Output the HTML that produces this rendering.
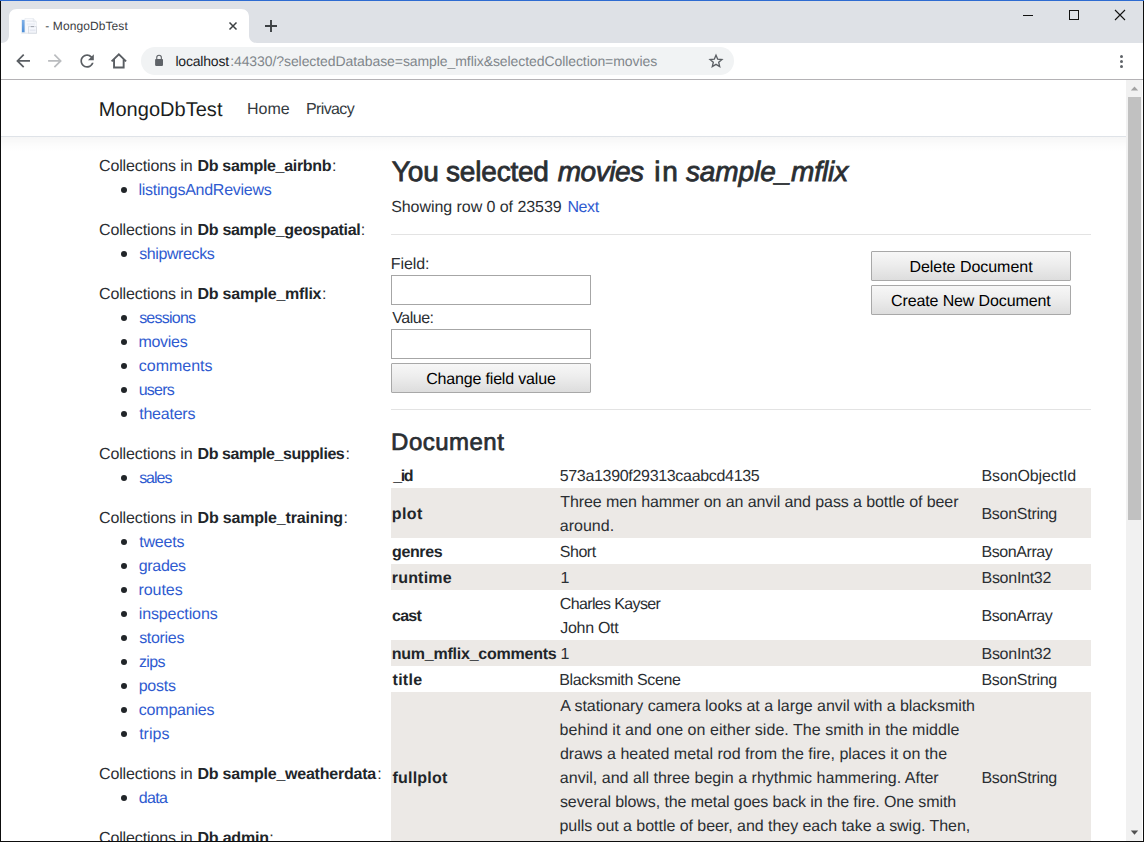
<!DOCTYPE html>
<html><head><meta charset="utf-8"><title>- MongoDbTest</title>
<style>
html,body{margin:0;padding:0;}
body{width:1144px;height:842px;overflow:hidden;position:relative;background:#fff;font-family:"Liberation Sans",sans-serif;}
.a{position:absolute;}
.t{position:absolute;white-space:pre;font-family:"Liberation Sans",sans-serif;text-rendering:geometricPrecision;}
.bul{position:absolute;left:121px;width:6px;height:6px;border-radius:50%;background:#212529;}
.stripe{position:absolute;left:391px;width:700px;background:#ece9e6;}
.hr{position:absolute;left:391px;width:700px;height:1px;background:#e3e3e3;}
.inp{position:absolute;left:391px;width:198px;height:28px;border:1px solid #a6a6a6;background:#fff;}
.btn{position:absolute;width:198px;height:28px;border:1px solid #a8a8a8;border-radius:1px;background:linear-gradient(#f7f7f7,#ededed 45%,#dddddd);}
</style></head><body>
<!-- tab strip -->
<div class="a" style="left:0;top:0;width:1144px;height:43px;background:#dee1e6;"></div>
<!-- toolbar -->
<div class="a" style="left:0;top:43px;width:1144px;height:36px;background:#fff;"></div>
<div class="a" style="left:0;top:79px;width:1144px;height:1px;background:#b4b2b5;"></div>
<!-- active tab -->
<svg class="a" style="left:0;top:0" width="260" height="44" viewBox="0 0 260 44">
<path d="M1 43 C6 43 9 40 9 35 L9 17 C9 12 12 9 17 9 L241 9 C246 9 249 12 249 17 L249 35 C249 40 252 43 257 43 L257 44 L1 44 Z" fill="#fff"/>
</svg>
<!-- favicon -->
<svg class="a" style="left:21px;top:18px" width="17" height="16" viewBox="0 0 17 16">
<defs><linearGradient id="fb" x1="0" y1="0" x2="0" y2="1"><stop offset="0" stop-color="#7fb0e8"/><stop offset="1" stop-color="#4d8ed8"/></linearGradient></defs>
<rect x="0.2" y="14.6" width="15.8" height="1" fill="#e3e5ea"/>
<rect x="0.2" y="1.4" width="0.6" height="13.2" fill="#eceef2"/>
<rect x="0.9" y="1.9" width="3.1" height="12.4" fill="url(#fb)"/>
<path d="M3.9 0.5 H12.2 L15.5 3.8 V15 H3.9 Z" fill="#f8f9fd" stroke="#e4e7ed" stroke-width="0.6"/>
<path d="M12.2 0.5 V3.8 H15.5" fill="#eef0f5" stroke="#d9dce3" stroke-width="0.5"/>
<rect x="5.6" y="2.6" width="6.2" height="1" fill="#e3e6ed"/>
<rect x="5.6" y="5.2" width="8.6" height="2.2" fill="#eceff6"/>
<rect x="7.4" y="8.7" width="8.2" height="6.4" fill="#f5f7fc" stroke="#cfd3db" stroke-width="0.7"/>
<rect x="9.8" y="8.3" width="3.2" height="0.8" fill="#8d929c"/>
<rect x="8.7" y="11.4" width="5.8" height="1.8" fill="#e6e9f2"/>
</svg>
<!-- tab close -->
<svg class="a" style="left:226px;top:19px" width="14" height="14" viewBox="0 0 14 14"><path d="M3.5 3.5 L10.5 10.5 M10.5 3.5 L3.5 10.5" stroke="#3c4043" stroke-width="1.5" fill="none"/></svg>
<!-- new tab plus -->
<svg class="a" style="left:262px;top:17px" width="18" height="18" viewBox="0 0 18 18"><path d="M9 3 V15 M3 9 H15" stroke="#3c4043" stroke-width="1.9" fill="none"/></svg>
<!-- window controls -->
<div class="a" style="left:1023px;top:15px;width:10px;height:1px;background:#111;"></div>
<div class="a" style="left:1069px;top:10px;width:8px;height:8px;border:1px solid #111;"></div>
<svg class="a" style="left:1114px;top:9px" width="12" height="12" viewBox="0 0 12 12"><path d="M1 1 L11 11 M11 1 L1 11" stroke="#111" stroke-width="1.1" fill="none"/></svg>
<!-- nav icons -->
<svg class="a" style="left:14px;top:52px" width="18" height="18" viewBox="0 0 18 18"><g transform="translate(9.1 8.95) scale(0.86) translate(-12 -12)"><path d="M20 11H7.83l5.59-5.59L12 4l-8 8 8 8 1.41-1.41L7.83 13H20v-2z" fill="#5a5e63"/></g></svg>
<svg class="a" style="left:46px;top:52px" width="18" height="18" viewBox="0 0 18 18"><g transform="translate(9 8.95) scale(0.86) translate(-12 -12)"><path d="M12 4l-1.41 1.41L16.17 11H4v2h12.17l-5.58 5.59L12 20l8-8z" fill="#babcbf"/></g></svg>
<svg class="a" style="left:78px;top:52px" width="18" height="18" viewBox="0 0 18 18"><g transform="translate(9.1 9) scale(0.84) translate(-12 -12)"><path d="M17.65 6.35C16.2 4.9 14.21 4 12 4c-4.42 0-7.99 3.58-7.99 8s3.57 8 7.99 8c3.73 0 6.84-2.55 7.73-6h-2.08c-.82 2.33-3.04 4-5.65 4-3.31 0-6-2.69-6-6s2.69-6 6-6c1.66 0 3.14.69 4.22 1.78L13 11h7V4l-2.35 2.35z" fill="#5a5e63"/></g></svg>
<svg class="a" style="left:110px;top:52px" width="18" height="18" viewBox="0 0 18 18"><path d="M1.6 9.4 L8.85 2.3 L16.1 9.4 M4.05 7.6 V15.45 H13.65 V7.6" stroke="#5a5e63" stroke-width="1.9" fill="none" stroke-linejoin="miter"/></svg>
<!-- omnibox -->
<div class="a" style="left:141px;top:47px;width:593px;height:28px;border-radius:14px;background:#f1f3f4;"></div>
<svg class="a" style="left:153px;top:54px" width="12" height="13" viewBox="0 0 12 13"><rect x="2.1" y="5.1" width="7.9" height="6.8" rx="0.8" fill="#5f6368"/><path d="M3.75 5.6 V3.6 A2.3 2.3 0 0 1 8.35 3.6 V5.6" stroke="#5f6368" stroke-width="1.1" fill="none"/></svg>
<svg class="a" style="left:708px;top:53px" width="16" height="16" viewBox="0 0 16 16"><g transform="translate(8 8.1) scale(0.9) translate(-8 -8.1)"><path d="M8 1.6 L9.9 6 L14.6 6.4 L11 9.5 L12.1 14.2 L8 11.7 L3.9 14.2 L5 9.5 L1.4 6.4 L6.1 6 Z" stroke="#5a5e63" stroke-width="1.5" fill="none" stroke-linejoin="miter"/></g></svg>
<!-- menu dots -->
<div class="a" style="left:1119.7px;top:55px;width:3.2px;height:3.2px;border-radius:50%;background:#5f6368;"></div>
<div class="a" style="left:1119.7px;top:59.9px;width:3.2px;height:3.2px;border-radius:50%;background:#5f6368;"></div>
<div class="a" style="left:1119.7px;top:64.8px;width:3.2px;height:3.2px;border-radius:50%;background:#5f6368;"></div>

<!-- page navbar -->
<div class="a" style="left:1px;top:136px;width:1125px;height:1px;background:#dfe3e8;"></div>
<div class="a" style="left:1px;top:137px;width:1125px;height:15px;background:linear-gradient(rgba(0,0,0,0.034),rgba(0,0,0,0.012) 55%,rgba(0,0,0,0));"></div>

<!-- bullets -->
<div class="bul" style="top:187.0px"></div>
<div class="bul" style="top:251.0px"></div>
<div class="bul" style="top:315.0px"></div>
<div class="bul" style="top:339.0px"></div>
<div class="bul" style="top:363.0px"></div>
<div class="bul" style="top:387.0px"></div>
<div class="bul" style="top:411.0px"></div>
<div class="bul" style="top:475.0px"></div>
<div class="bul" style="top:539.0px"></div>
<div class="bul" style="top:563.0px"></div>
<div class="bul" style="top:587.0px"></div>
<div class="bul" style="top:611.0px"></div>
<div class="bul" style="top:635.0px"></div>
<div class="bul" style="top:659.0px"></div>
<div class="bul" style="top:683.0px"></div>
<div class="bul" style="top:707.0px"></div>
<div class="bul" style="top:731.0px"></div>
<div class="bul" style="top:795.0px"></div>

<!-- hr -->
<div class="hr" style="top:234px"></div>
<div class="hr" style="top:409px"></div>
<!-- inputs & buttons -->
<div class="inp" style="top:275px"></div>
<div class="inp" style="top:329px"></div>
<div class="btn" style="left:391px;top:363px"></div>
<div class="btn" style="left:871px;top:251px"></div>
<div class="btn" style="left:871px;top:285px"></div>
<!-- table stripes -->
<div class="stripe" style="top:488px;height:50px"></div>
<div class="stripe" style="top:564px;height:26px"></div>
<div class="stripe" style="top:640px;height:26px"></div>
<div class="stripe" style="top:692px;height:150px"></div>

<span class="t" style="left:98.79px;top:95.07px;font-size:20px;line-height:30px;letter-spacing:0.026px;color:#1b1e21;">MongoDbTest</span>
<span class="t" style="left:247.02px;top:98.46px;font-size:16px;line-height:24px;letter-spacing:-0.025px;color:#343a40;">Home</span>
<span class="t" style="left:306.02px;top:98.46px;font-size:16px;line-height:24px;letter-spacing:-0.633px;color:#343a40;">Privacy</span>
<span class="t" style="left:98.95px;top:155.46px;font-size:16px;line-height:24px;letter-spacing:-0.117px;color:#2a2e32;">Collections in</span>
<span class="t" style="left:197.53px;top:155.46px;font-size:16px;line-height:24px;letter-spacing:-0.315px;color:#212529;font-weight:700;">Db sample_airbnb</span>
<span class="t" style="left:332.02px;top:155.46px;font-size:16px;line-height:24px;letter-spacing:0.000px;color:#2a2e32;">:</span>
<span class="t" style="left:98.95px;top:219.46px;font-size:16px;line-height:24px;letter-spacing:-0.117px;color:#2a2e32;">Collections in</span>
<span class="t" style="left:197.53px;top:219.46px;font-size:16px;line-height:24px;letter-spacing:-0.300px;color:#212529;font-weight:700;">Db sample_geospatial</span>
<span class="t" style="left:360.80px;top:219.46px;font-size:16px;line-height:24px;letter-spacing:0.000px;color:#2a2e32;">:</span>
<span class="t" style="left:98.95px;top:283.46px;font-size:16px;line-height:24px;letter-spacing:-0.117px;color:#2a2e32;">Collections in</span>
<span class="t" style="left:197.53px;top:283.46px;font-size:16px;line-height:24px;letter-spacing:-0.226px;color:#212529;font-weight:700;">Db sample_mflix</span>
<span class="t" style="left:322.02px;top:283.46px;font-size:16px;line-height:24px;letter-spacing:0.000px;color:#2a2e32;">:</span>
<span class="t" style="left:98.95px;top:443.46px;font-size:16px;line-height:24px;letter-spacing:-0.117px;color:#2a2e32;">Collections in</span>
<span class="t" style="left:197.53px;top:443.46px;font-size:16px;line-height:24px;letter-spacing:-0.441px;color:#212529;font-weight:700;">Db sample_supplies</span>
<span class="t" style="left:345.50px;top:443.46px;font-size:16px;line-height:24px;letter-spacing:0.000px;color:#2a2e32;">:</span>
<span class="t" style="left:98.95px;top:507.46px;font-size:16px;line-height:24px;letter-spacing:-0.117px;color:#2a2e32;">Collections in</span>
<span class="t" style="left:197.53px;top:507.46px;font-size:16px;line-height:24px;letter-spacing:-0.176px;color:#212529;font-weight:700;">Db sample_training</span>
<span class="t" style="left:343.50px;top:507.46px;font-size:16px;line-height:24px;letter-spacing:0.000px;color:#2a2e32;">:</span>
<span class="t" style="left:98.95px;top:763.46px;font-size:16px;line-height:24px;letter-spacing:-0.117px;color:#2a2e32;">Collections in</span>
<span class="t" style="left:197.53px;top:763.46px;font-size:16px;line-height:24px;letter-spacing:-0.227px;color:#212529;font-weight:700;">Db sample_weatherdata</span>
<span class="t" style="left:377.21px;top:763.46px;font-size:16px;line-height:24px;letter-spacing:0.000px;color:#2a2e32;">:</span>
<span class="t" style="left:98.95px;top:827.46px;font-size:16px;line-height:24px;letter-spacing:-0.117px;color:#2a2e32;">Collections in</span>
<span class="t" style="left:197.53px;top:827.46px;font-size:16px;line-height:24px;letter-spacing:-0.215px;color:#212529;font-weight:700;">Db admin</span>
<span class="t" style="left:269.14px;top:827.46px;font-size:16px;line-height:24px;letter-spacing:0.000px;color:#2a2e32;">:</span>
<span class="t" style="left:138.44px;top:179.46px;font-size:16px;line-height:24px;letter-spacing:-0.270px;color:#2f5bd0;">listingsAndReviews</span>
<span class="t" style="left:139.14px;top:243.46px;font-size:16px;line-height:24px;letter-spacing:-0.391px;color:#2f5bd0;">shipwrecks</span>
<span class="t" style="left:139.14px;top:307.46px;font-size:16px;line-height:24px;letter-spacing:-0.759px;color:#2f5bd0;">sessions</span>
<span class="t" style="left:138.42px;top:331.46px;font-size:16px;line-height:24px;letter-spacing:-0.283px;color:#2f5bd0;">movies</span>
<span class="t" style="left:138.84px;top:355.46px;font-size:16px;line-height:24px;letter-spacing:-0.025px;color:#2f5bd0;">comments</span>
<span class="t" style="left:138.73px;top:379.46px;font-size:16px;line-height:24px;letter-spacing:-0.769px;color:#2f5bd0;">users</span>
<span class="t" style="left:139.17px;top:403.46px;font-size:16px;line-height:24px;letter-spacing:-0.219px;color:#2f5bd0;">theaters</span>
<span class="t" style="left:139.14px;top:467.46px;font-size:16px;line-height:24px;letter-spacing:-1.007px;color:#2f5bd0;">sales</span>
<span class="t" style="left:139.17px;top:531.46px;font-size:16px;line-height:24px;letter-spacing:-0.194px;color:#2f5bd0;">tweets</span>
<span class="t" style="left:138.84px;top:555.46px;font-size:16px;line-height:24px;letter-spacing:-0.356px;color:#2f5bd0;">grades</span>
<span class="t" style="left:138.42px;top:579.46px;font-size:16px;line-height:24px;letter-spacing:-0.040px;color:#2f5bd0;">routes</span>
<span class="t" style="left:138.70px;top:603.46px;font-size:16px;line-height:24px;letter-spacing:-0.105px;color:#2f5bd0;">inspections</span>
<span class="t" style="left:139.14px;top:627.46px;font-size:16px;line-height:24px;letter-spacing:-0.299px;color:#2f5bd0;">stories</span>
<span class="t" style="left:138.89px;top:651.46px;font-size:16px;line-height:24px;letter-spacing:-0.622px;color:#2f5bd0;">zips</span>
<span class="t" style="left:138.70px;top:675.46px;font-size:16px;line-height:24px;letter-spacing:-0.216px;color:#2f5bd0;">posts</span>
<span class="t" style="left:138.84px;top:699.46px;font-size:16px;line-height:24px;letter-spacing:-0.219px;color:#2f5bd0;">companies</span>
<span class="t" style="left:139.17px;top:723.46px;font-size:16px;line-height:24px;letter-spacing:0.012px;color:#2f5bd0;">trips</span>
<span class="t" style="left:138.84px;top:787.46px;font-size:16px;line-height:24px;letter-spacing:-0.650px;color:#2f5bd0;">data</span>
<span class="t" style="left:391.86px;top:151.30px;font-size:28px;line-height:42px;letter-spacing:-0.203px;color:#2a2e32;-webkit-text-stroke:0.8px #2a2e32;">You selected</span>
<span class="t" style="left:557.74px;top:151.30px;font-size:28px;line-height:42px;letter-spacing:-0.476px;color:#2a2e32;font-style:italic;-webkit-text-stroke:0.8px #2a2e32;">movies</span>
<span class="t" style="left:654.20px;top:151.30px;font-size:28px;line-height:42px;letter-spacing:1.813px;color:#2a2e32;-webkit-text-stroke:0.8px #2a2e32;">in</span>
<span class="t" style="left:685.98px;top:151.30px;font-size:28px;line-height:42px;letter-spacing:-0.102px;color:#2a2e32;font-style:italic;-webkit-text-stroke:0.8px #2a2e32;">sample_mflix</span>
<span class="t" style="left:391.13px;top:196.46px;font-size:16px;line-height:24px;letter-spacing:-0.053px;color:#2a2e32;">Showing row 0 of 23539</span>
<span class="t" style="left:567.48px;top:196.46px;font-size:16px;line-height:24px;letter-spacing:-0.409px;color:#2f5bd0;">Next</span>
<span class="t" style="left:390.86px;top:253.46px;font-size:16px;line-height:24px;letter-spacing:-0.116px;color:#2a2e32;">Field:</span>
<span class="t" style="left:392.31px;top:307.46px;font-size:16px;line-height:24px;letter-spacing:-0.487px;color:#2a2e32;">Value:</span>
<span class="t" style="left:426.21px;top:368.46px;font-size:16px;line-height:24px;letter-spacing:-0.172px;color:#000;">Change field value</span>
<span class="t" style="left:909.42px;top:256.46px;font-size:16px;line-height:24px;letter-spacing:-0.032px;color:#000;">Delete Document</span>
<span class="t" style="left:890.99px;top:290.46px;font-size:16px;line-height:24px;letter-spacing:-0.117px;color:#000;">Create New Document</span>
<span class="t" style="left:391.11px;top:424.68px;font-size:24px;line-height:36px;letter-spacing:0.475px;color:#2a2e32;-webkit-text-stroke:0.7px #2a2e32;">Document</span>
<span class="t" style="left:393.25px;top:465.46px;font-size:16px;line-height:24px;letter-spacing:-1.378px;color:#212529;font-weight:700;">_id</span>
<span class="t" style="left:391.72px;top:503.46px;font-size:16px;line-height:24px;letter-spacing:0.403px;color:#212529;font-weight:700;">plot</span>
<span class="t" style="left:392.08px;top:541.46px;font-size:16px;line-height:24px;letter-spacing:-0.399px;color:#212529;font-weight:700;">genres</span>
<span class="t" style="left:391.73px;top:567.46px;font-size:16px;line-height:24px;letter-spacing:0.206px;color:#212529;font-weight:700;">runtime</span>
<span class="t" style="left:392.09px;top:605.46px;font-size:16px;line-height:24px;letter-spacing:-0.777px;color:#212529;font-weight:700;">cast</span>
<span class="t" style="left:391.72px;top:643.46px;font-size:16px;line-height:24px;letter-spacing:-0.233px;color:#212529;font-weight:700;">num_mflix_comments</span>
<span class="t" style="left:392.56px;top:669.46px;font-size:16px;line-height:24px;letter-spacing:0.265px;color:#212529;font-weight:700;">title</span>
<span class="t" style="left:392.51px;top:767.46px;font-size:16px;line-height:24px;letter-spacing:0.205px;color:#212529;font-weight:700;">fullplot</span>
<span class="t" style="left:559.68px;top:465.46px;font-size:16px;line-height:24px;letter-spacing:-0.316px;color:#2a2e32;">573a1390f29313caabcd4135</span>
<span class="t" style="left:560.22px;top:491.46px;font-size:16px;line-height:24px;letter-spacing:-0.087px;color:#2a2e32;">Three men hammer on an anvil and pass a bottle of beer</span>
<span class="t" style="left:559.86px;top:515.46px;font-size:16px;line-height:24px;letter-spacing:-0.008px;color:#2a2e32;">around.</span>
<span class="t" style="left:559.68px;top:541.46px;font-size:16px;line-height:24px;letter-spacing:-0.423px;color:#2a2e32;">Short</span>
<span class="t" style="left:559.77px;top:593.46px;font-size:16px;line-height:24px;letter-spacing:-0.630px;color:#2a2e32;">Charles Kayser</span>
<span class="t" style="left:560.20px;top:617.46px;font-size:16px;line-height:24px;letter-spacing:-0.275px;color:#2a2e32;">John Ott</span>
<span class="t" style="left:559.29px;top:669.46px;font-size:16px;line-height:24px;letter-spacing:-0.365px;color:#2a2e32;">Blacksmith Scene</span>
<span class="t" style="left:560.36px;top:695.46px;font-size:16px;line-height:24px;letter-spacing:-0.057px;color:#2a2e32;">A stationary camera looks at a large anvil with a blacksmith</span>
<span class="t" style="left:559.55px;top:719.46px;font-size:16px;line-height:24px;letter-spacing:0.047px;color:#2a2e32;">behind it and one on either side. The smith in the middle</span>
<span class="t" style="left:559.89px;top:743.46px;font-size:16px;line-height:24px;letter-spacing:0.007px;color:#2a2e32;">draws a heated metal rod from the fire, places it on the</span>
<span class="t" style="left:559.86px;top:767.46px;font-size:16px;line-height:24px;letter-spacing:0.015px;color:#2a2e32;">anvil, and all three begin a rhythmic hammering. After</span>
<span class="t" style="left:559.94px;top:791.46px;font-size:16px;line-height:24px;letter-spacing:-0.087px;color:#2a2e32;">several blows, the metal goes back in the fire. One smith</span>
<span class="t" style="left:559.53px;top:815.46px;font-size:16px;line-height:24px;letter-spacing:-0.044px;color:#2a2e32;">pulls out a bottle of beer, and they each take a swig. Then,</span>
<span class="t" style="left:560.39px;top:567.46px;font-size:16px;line-height:24px;letter-spacing:0.000px;color:#2a2e32;">1</span>
<span class="t" style="left:560.39px;top:643.46px;font-size:16px;line-height:24px;letter-spacing:0.000px;color:#2a2e32;">1</span>
<span class="t" style="left:981.48px;top:465.46px;font-size:16px;line-height:24px;letter-spacing:-0.116px;color:#2a2e32;">BsonObjectId</span>
<span class="t" style="left:981.48px;top:503.46px;font-size:16px;line-height:24px;letter-spacing:-0.275px;color:#2a2e32;">BsonString</span>
<span class="t" style="left:981.48px;top:541.46px;font-size:16px;line-height:24px;letter-spacing:-0.426px;color:#2a2e32;">BsonArray</span>
<span class="t" style="left:981.48px;top:567.46px;font-size:16px;line-height:24px;letter-spacing:-0.265px;color:#2a2e32;">BsonInt32</span>
<span class="t" style="left:981.48px;top:605.46px;font-size:16px;line-height:24px;letter-spacing:-0.426px;color:#2a2e32;">BsonArray</span>
<span class="t" style="left:981.48px;top:643.46px;font-size:16px;line-height:24px;letter-spacing:-0.265px;color:#2a2e32;">BsonInt32</span>
<span class="t" style="left:981.48px;top:669.46px;font-size:16px;line-height:24px;letter-spacing:-0.275px;color:#2a2e32;">BsonString</span>
<span class="t" style="left:981.48px;top:767.46px;font-size:16px;line-height:24px;letter-spacing:-0.275px;color:#2a2e32;">BsonString</span>
<span class="t" style="left:45.32px;top:16.84px;font-size:12px;line-height:18px;letter-spacing:0.088px;color:#3c4043;">- MongoDbTest</span>
<span class="t" style="left:175.40px;top:50.65px;font-size:14px;line-height:21px;letter-spacing:-0.188px;color:#202124;">localhost</span>
<span class="t" style="left:230.13px;top:50.65px;font-size:14px;line-height:21px;letter-spacing:-0.079px;color:#80868b;">:44330/?selectedDatabase=sample_mflix&amp;selectedCollection=movies</span>

<!-- scrollbar -->
<div class="a" style="left:1126px;top:80px;width:16px;height:761px;background:#f1f1f1;"></div>
<div class="a" style="left:1128px;top:97px;width:13px;height:423px;background:#c1c1c1;"></div>
<svg class="a" style="left:1130px;top:85px" width="9" height="7" viewBox="0 0 9 7"><path d="M4.5 1.5 L8.2 5.6 H0.8 Z" fill="#a3a3a3"/></svg>
<svg class="a" style="left:1130px;top:829px" width="9" height="7" viewBox="0 0 9 7"><path d="M0.8 1.6 H8.2 L4.5 5.7 Z" fill="#505050"/></svg>
<!-- window borders -->
<div class="a" style="left:0;top:0;width:1144px;height:1px;background:#2d6bd1;"></div>
<div class="a" style="left:0;top:1px;width:1px;height:841px;background:#0d0d0d;"></div>
<div class="a" style="left:1143px;top:1px;width:1px;height:841px;background:#0d0d0d;"></div>
<div class="a" style="left:0;top:841px;width:1144px;height:1px;background:#0d0d0d;"></div>
</body></html>
